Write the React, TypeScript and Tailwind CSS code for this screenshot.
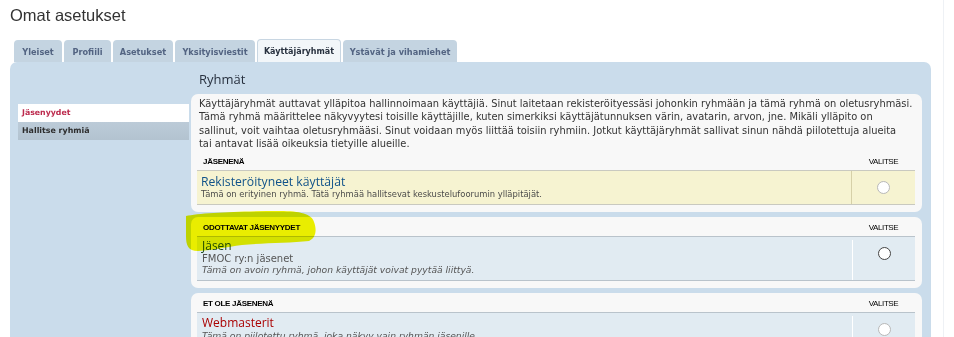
import React from "react";

const tabs = [
  { label: "Yleiset", w: "w-[48px]", active: false },
  { label: "Profiili", w: "w-[47px]", active: false },
  { label: "Asetukset", w: "w-[60px]", active: false },
  { label: "Yksityisviestit", w: "w-[80px]", active: false },
  { label: "Käyttäjäryhmät", w: "w-[84px]", active: true },
  { label: "Ystävät ja vihamiehet", w: "w-[114px]", active: false },
];

function Radio({ dark }: { dark?: boolean }) {
  return (
    <span
      className={
        "block w-[13px] h-[13px] rounded-full bg-white border " +
        (dark ? "border-[#444]" : "border-[#b8b8b8]")
      }
    />
  );
}

function Header({ label }: { label: string }) {
  return (
    <div className="flex items-end h-[19px] pb-[4px] font-['Liberation_Sans',Arial,sans-serif] text-[8px] leading-[9px] text-[#000]">
      <span className="flex-1 pl-[6px] font-bold tracking-[-0.3px]">{label}</span>
      <span className="w-[63px] text-center tracking-[-0.4px]">VALITSE</span>
    </div>
  );
}

export default function App() {
  return (
    <div className="flex w-[954px] h-[337px] overflow-hidden bg-white font-['DejaVu_Sans',Verdana,sans-serif]">
      <div className="relative w-[943px] shrink-0">
        <div className="h-[39px] pl-[10px] pt-[4px] text-[16.5px] leading-[22px] text-[#333] font-['Liberation_Sans',Arial,sans-serif]">
          Omat asetukset
        </div>
        <div className="flex items-end h-[23px] pl-[14px] gap-[2px]">
          {tabs.map((t) =>
            t.active ? (
              <div
                key={t.label}
                className={
                  t.w +
                  " h-[23px] bg-[#f2f6f9] border border-b-0 border-[#c8d6e2] rounded-t-[4px] flex items-center justify-center text-[8px] font-bold text-[#28313f] pt-[1px] whitespace-nowrap"
                }
              >
                {t.label}
              </div>
            ) : (
              <div
                key={t.label}
                className={
                  t.w +
                  " h-[22px] bg-[#c4d4e1] rounded-t-[4px] flex items-center justify-center text-[8.2px] font-bold text-[#536482] pt-[2px] whitespace-nowrap"
                }
              >
                {t.label}
              </div>
            )
          )}
        </div>
        <div className="ml-[10px] w-[921px] h-[275px] bg-[#cadceb] rounded-t-[7px] flex">
          <div className="w-[171px] ml-[8px] mt-[42px] shrink-0">
            <div className="h-[18px] bg-white flex items-center pl-[4px] text-[7.8px] font-bold text-[#bc2a4d]">
              Jäsenyydet
            </div>
            <div className="h-[18px] bg-gradient-to-b from-[#bccbd8] to-[#b3c3d0] flex items-center pl-[4px] text-[7.9px] font-bold text-[#2d2d2d]">
              Hallitse ryhmiä
            </div>
          </div>
          <div className="w-[731px] ml-[2px] shrink-0">
            <div className="h-[32px] pl-[8px] pt-[9px] text-[13px] leading-[17px] text-[#28313f] font-['Open_Sans',sans-serif]">
              Ryhmät
            </div>

            {/* Box 1 */}
            <div className="bg-[#f8f8f8] rounded-[7px] pl-[6px] pr-[7px] pt-[3px] pb-[7px]">
              <p className="pl-[2px] text-[9.9px] leading-[13.3px] text-[#333] whitespace-nowrap">
                Käyttäjäryhmät auttavat ylläpitoa hallinnoimaan käyttäjiä. Sinut laitetaan rekisteröityessäsi johonkin ryhmään ja tämä ryhmä on oletusryhmäsi.
                <br />
                Tämä ryhmä määrittelee näkyvyytesi toisille käyttäjille, kuten simerkiksi käyttäjätunnuksen värin, avatarin, arvon, jne. Mikäli ylläpito on
                <br />
                sallinut, voit vaihtaa oletusryhmääsi. Sinut voidaan myös liittää toisiin ryhmiin. Jotkut käyttäjäryhmät sallivat sinun nähdä piilotettuja alueita
                <br />
                tai antavat lisää oikeuksia tietyille alueille.
              </p>
              <div className="h-[1px]" />
              <Header label="JÄSENENÄ" />
              <div className="flex h-[35px] bg-[#f6f3d1] border-t border-b border-[#c9c9c0]">
                <div className="flex-1 pl-[4px] pt-[4px] border-r border-[#d6d0a8]">
                  <div className="text-[12.2px] leading-[14px] text-[#105289] font-['Open_Sans',sans-serif]">
                    Rekisteröityneet käyttäjät
                  </div>
                  <div className="text-[8.4px] leading-[10px] text-[#4a4a4a]">
                    Tämä on erityinen ryhmä. Tätä ryhmää hallitsevat keskustelufoorumin ylläpitäjät.
                  </div>
                </div>
                <div className="w-[63px] flex justify-center pt-[10px]">
                  <Radio />
                </div>
              </div>
            </div>

            {/* Box 2 */}
            <div className="mt-[5px] bg-[#f8f8f8] rounded-[7px] pl-[6px] pr-[7px] pb-[7px]">
              <Header label="ODOTTAVAT JÄSENYYDET" />
              <div className="flex h-[45px] bg-[#e1ebf2] border-t border-b border-[#b9c3cb]">
                <div className="flex-1 pl-[5px] pt-[2px]">
                  <div className="text-[12px] leading-[14px] text-[#1d4a1d] font-['Open_Sans',sans-serif]">
                    Jäsen
                  </div>
                  <div className="text-[10px] leading-[11px] text-[#555]">
                    FMOC ry:n jäsenet
                  </div>
                  <div className="text-[9.2px] leading-[11px] italic text-[#555]">
                    Tämä on avoin ryhmä, johon käyttäjät voivat pyytää liittyä.
                  </div>
                </div>
                <div className="w-[63px] flex justify-center pt-[7px] border-l border-white mt-[3px]">
                  <Radio dark />
                </div>
              </div>
            </div>

            {/* Box 3 */}
            <div className="mt-[5px] bg-[#f8f8f8] rounded-t-[7px] pl-[6px] pr-[7px] h-[60px]">
              <Header label="ET OLE JÄSENENÄ" />
              <div className="flex h-[45px] bg-[#e1ebf2] border-t border-[#b9c3cb]">
                <div className="flex-1 pl-[5px] pt-[3px]">
                  <div className="text-[12px] leading-[14px] text-[#aa0000] font-['Open_Sans',sans-serif]">
                    Webmasterit
                  </div>
                  <div className="text-[9.2px] leading-[11px] italic text-[#555]">
                    Tämä on piilotettu ryhmä, joka näkyy vain ryhmän jäsenille.
                  </div>
                </div>
                <div className="w-[63px] flex justify-center pt-[7px] border-l border-white mt-[3px]">
                  <Radio />
                </div>
              </div>
            </div>
          </div>
        </div>
        <svg
          className="absolute left-0 top-0 pointer-events-none mix-blend-multiply"
          width="943"
          height="337"
          viewBox="0 0 943 337"
        >
          <path
            d="M186,216 C200,213 240,211 280,211 C300,211 312,214 314,222 C317,230 316,238 309,241 C290,243 262,243 242,245 C226,247 214,250 198,251 C188,251 186,245 186,236 Z"
            fill="#f0f400"
          />
        </svg>
      </div>
      <div className="w-[11px] h-full border-l border-[#eef1f5]" />
    </div>
  );
}
